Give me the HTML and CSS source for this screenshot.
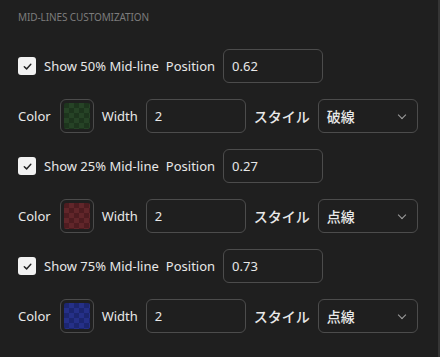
FILE: index.html
```html
<!DOCTYPE html>
<html lang="ja">

<head>
    <meta charset="UTF-8">
    <meta name="viewport" content="width=device-width, initial-scale=1.0">
    <title>Mid-lines customization</title>
    <link rel="stylesheet" href="styles.css">
</head>

<body>
    <div class="panel">
        <div class="section-title">MID-LINES CUSTOMIZATION</div>

        <div class="rows">
            <!-- 50% -->
            <div class="row">
                <label class="check"><span class="box">
                        <svg viewBox="0 0 12 12" width="11" height="11"><path d="M2.5 6.2 L5 8.6 L9.6 3.6" fill="none" stroke="#222" stroke-width="1.6" stroke-linecap="round" stroke-linejoin="round"/></svg>
                    </span>Show 50% Mid-line</label>
                <span class="label">Position</span>
                <div class="field">0.62</div>
            </div>
            <div class="row">
                <span class="label">Color</span>
                <div class="swatch"><div class="chip green"></div></div>
                <span class="label">Width</span>
                <div class="field">2</div>
                <span class="label jp">スタイル</span>
                <div class="field select">破線<span class="chev"></span></div>
            </div>

            <!-- 25% -->
            <div class="row">
                <label class="check"><span class="box">
                        <svg viewBox="0 0 12 12" width="11" height="11"><path d="M2.5 6.2 L5 8.6 L9.6 3.6" fill="none" stroke="#222" stroke-width="1.6" stroke-linecap="round" stroke-linejoin="round"/></svg>
                    </span>Show 25% Mid-line</label>
                <span class="label">Position</span>
                <div class="field">0.27</div>
            </div>
            <div class="row">
                <span class="label">Color</span>
                <div class="swatch"><div class="chip red"></div></div>
                <span class="label">Width</span>
                <div class="field">2</div>
                <span class="label jp">スタイル</span>
                <div class="field select">点線<span class="chev"></span></div>
            </div>

            <!-- 75% -->
            <div class="row">
                <label class="check"><span class="box">
                        <svg viewBox="0 0 12 12" width="11" height="11"><path d="M2.5 6.2 L5 8.6 L9.6 3.6" fill="none" stroke="#222" stroke-width="1.6" stroke-linecap="round" stroke-linejoin="round"/></svg>
                    </span>Show 75% Mid-line</label>
                <span class="label">Position</span>
                <div class="field">0.73</div>
            </div>
            <div class="row">
                <span class="label">Color</span>
                <div class="swatch"><div class="chip blue"></div></div>
                <span class="label">Width</span>
                <div class="field">2</div>
                <span class="label jp">スタイル</span>
                <div class="field select">点線<span class="chev"></span></div>
            </div>
        </div>
    </div>
</body>

</html>
```

FILE: styles.css
```css
body {
    margin: 0;
    background-color: #1f1f1f;
    font-family: "Noto Sans", "Noto Sans CJK JP", sans-serif;
    color: #e8e8e8;
    overflow: hidden;
}

.panel {
    width: 420px;
    height: 357px;
    padding: 10px 0 0 18px;
    border-right: 2px solid #353535;
}

.section-title {
    font-size: 10px;
    color: #7c7c7c;
    letter-spacing: -0.1px;
    line-height: 14px;
}

.rows {
    margin-top: 25px;
    display: flex;
    flex-direction: column;
    gap: 16px;
}

.row {
    display: flex;
    align-items: center;
    height: 34px;
    gap: 8px;
}

.label,
.check {
    font-size: 13px;
    white-space: nowrap;
}

.jp {
    font-family: "Noto Sans CJK JP", sans-serif;
    font-size: 14px;
    font-weight: 500;
}

.check {
    display: flex;
    align-items: center;
    gap: 8px;
    margin-right: -1px;
}

.box {
    width: 18px;
    height: 18px;
    background: #f2f2f2;
    border-radius: 3px;
    display: flex;
    align-items: center;
    justify-content: center;
}

.field {
    box-sizing: border-box;
    width: 100px;
    height: 34px;
    border: 1px solid #4c4c4c;
    border-radius: 6px;
    padding: 0 8px;
    display: flex;
    align-items: center;
    font-size: 13px;
    color: #e8e8e8;
}

.select {
    font-family: "Noto Sans CJK JP", sans-serif;
    font-size: 14px;
    font-weight: 500;
    position: relative;
}

.chev {
    position: absolute;
    right: 12px;
    top: 12px;
    width: 5px;
    height: 5px;
    border-right: 1.2px solid #a0a0a0;
    border-bottom: 1.2px solid #a0a0a0;
    transform: rotate(45deg);
}

.swatch {
    box-sizing: border-box;
    width: 34px;
    height: 34px;
    border: 1px solid #4c4c4c;
    border-radius: 6px;
    margin-left: 1px;
    display: flex;
    align-items: center;
    justify-content: center;
}

.chip {
    width: 26px;
    height: 26px;
    border-radius: 2px;
    background-size: 10px 10px;
    background-position: 0 0, 5px 5px;
}

.green {
    background-color: #1d351d;
    background-image:
        linear-gradient(45deg, #264326 25%, transparent 25%, transparent 75%, #264326 75%),
        linear-gradient(45deg, #264326 25%, transparent 25%, transparent 75%, #264326 75%);
}

.red {
    background-color: #4e1c20;
    background-image:
        linear-gradient(45deg, #61262a 25%, transparent 25%, transparent 75%, #61262a 75%),
        linear-gradient(45deg, #61262a 25%, transparent 25%, transparent 75%, #61262a 75%);
}

.blue {
    background-color: #1c2670;
    background-image:
        linear-gradient(45deg, #253088 25%, transparent 25%, transparent 75%, #253088 75%),
        linear-gradient(45deg, #253088 25%, transparent 25%, transparent 75%, #253088 75%);
}
```
